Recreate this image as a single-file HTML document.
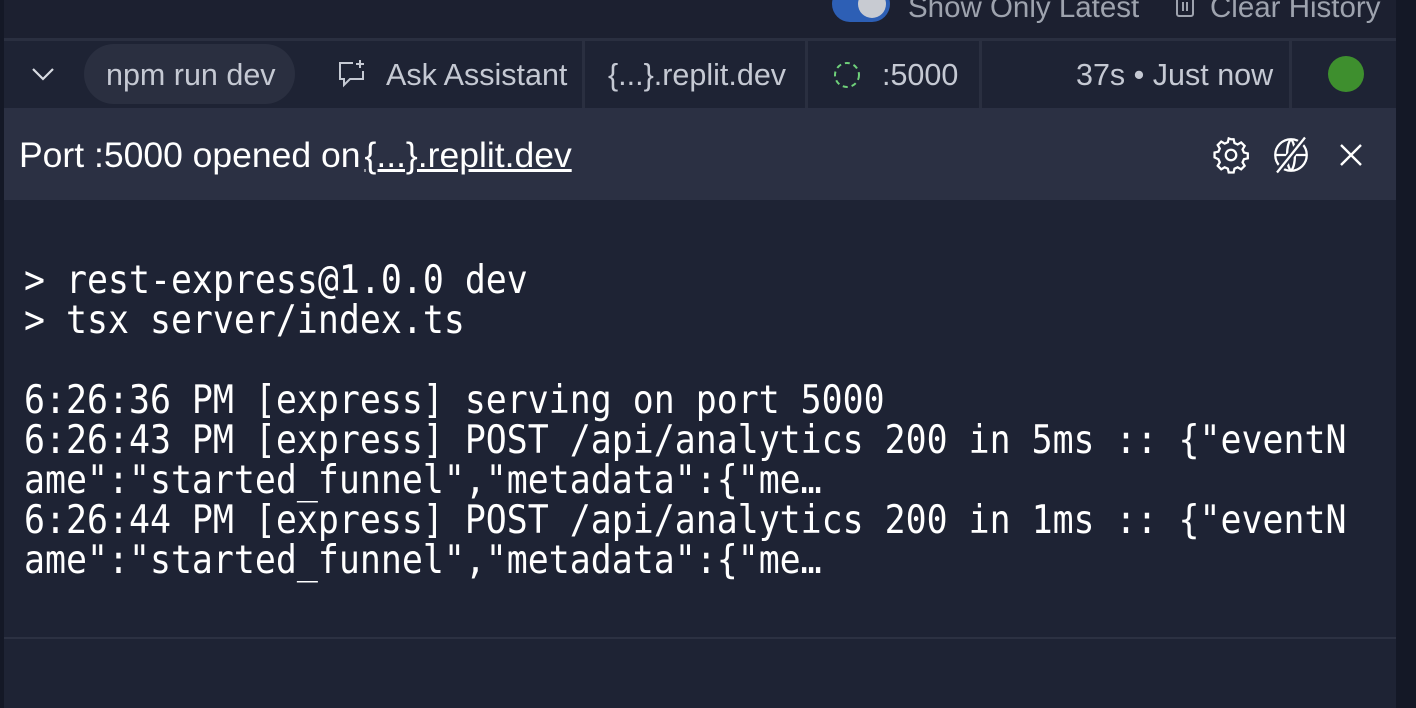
<!DOCTYPE html>
<html><head><style>
*{margin:0;padding:0;box-sizing:border-box}
body{width:1416px;height:708px;overflow:hidden;background:#1e2334;font-family:"Liberation Sans",sans-serif;position:relative;color:#c5c9d3}
.abs{position:absolute}
.t{font-size:30.5px;white-space:nowrap;position:absolute;line-height:1}
.sep{position:absolute;top:40px;width:3px;height:68px;background:#2a2f40}
.mono{font-family:"DejaVu Sans Mono","Liberation Mono",monospace;font-size:39px;line-height:40px;color:#fff;white-space:pre;position:absolute;left:24px;top:261px;transform:scaleX(0.894);transform-origin:0 0}
</style></head><body>
<div class="abs" style="left:0;top:0;width:4px;height:708px;background:#141826"></div>
<div class="abs" style="left:4px;top:0;width:1392px;height:38px;background:#1c2030"></div>
<div class="abs" style="left:4px;top:38px;width:1392px;height:3px;background:#2a2f40"></div>
<div class="abs" style="left:832px;top:-14px;width:58px;height:36px;border-radius:18px;background:#2d5fb5"></div>
<div class="abs" style="left:858px;top:-10px;width:28px;height:28px;border-radius:14px;background:#c8cbd2"></div>
<div class="t" style="left:908px;top:-7px;color:#9ea3ae;font-size:29.5px">Show Only Latest</div>
<svg class="abs" style="left:1174px;top:-4px" width="22" height="24" viewBox="0 0 22 24"><rect x="3" y="2" width="16" height="18" rx="2" fill="none" stroke="#9ea3ae" stroke-width="2"/><path d="M9 6v9M13 6v9" stroke="#9ea3ae" stroke-width="2"/></svg>
<div class="t" style="left:1210px;top:-7px;color:#9ea3ae;font-size:29.5px">Clear History</div>
<div class="abs" style="left:4px;top:41px;width:1392px;height:67px;background:#1e2334"></div>
<svg class="abs" style="left:30px;top:64px" width="26" height="20" viewBox="0 0 26 20"><path d="M3 5l10 10 10-10" fill="none" stroke="#d8dbe2" stroke-width="2.2"/></svg>
<div class="abs" style="left:84px;top:44px;width:211px;height:60px;border-radius:30px;background:#2a2f40"></div>
<div class="t" style="left:106px;top:60px;color:#c5c9d3">npm run dev</div>
<svg class="abs" style="left:336px;top:58px" width="32" height="32" viewBox="0 0 32 32"><path d="M17 5H4v16h4v6l6-6h13v-8" fill="none" stroke="#c5c9d3" stroke-width="2"/><path d="M24 2v8M20 6h8" stroke="#c5c9d3" stroke-width="2"/></svg>
<div class="t" style="left:386px;top:60px">Ask Assistant</div>
<div class="sep" style="left:582px"></div>
<div class="t" style="left:608px;top:60px">{...}.replit.dev</div>
<div class="sep" style="left:805px"></div>
<svg class="abs" style="left:832px;top:60px" width="30" height="30" viewBox="0 0 30 30"><circle cx="15" cy="15" r="12" fill="none" stroke="#6fd17a" stroke-width="2" stroke-dasharray="5 4"/></svg>
<div class="t" style="left:882px;top:60px">:5000</div>
<div class="sep" style="left:979px"></div>
<div class="t" style="left:1076px;top:60px">37s • Just now</div>
<div class="sep" style="left:1289px"></div>
<div class="abs" style="left:1328px;top:56px;width:36px;height:36px;border-radius:18px;background:#3e8f2e"></div>
<div class="abs" style="left:4px;top:108px;width:1392px;height:92px;background:#2b3043"></div>
<div class="t" style="left:19px;top:138px;color:#fff;font-size:35.5px">Port :5000 opened on<span style="text-decoration:underline;margin-left:4px">{...}.replit.dev</span></div>
<svg class="abs" style="left:1210px;top:134px" width="42" height="42" viewBox="0 0 24 24"><path d="M12 3l1.5 0 .5 2.2 1.8.8 2-1.2 2 2-1.2 2 .8 1.8 2.2.5v2.8l-2.2.5-.8 1.8 1.2 2-2 2-2-1.2-1.8.8-.5 2.2h-2.8l-.5-2.2-1.8-.8-2 1.2-2-2 1.2-2-.8-1.8L2.6 13.4v-2.8l2.2-.5.8-1.8-1.2-2 2-2 2 1.2 1.8-.8.5-2.2z" fill="none" stroke="#fff" stroke-width="1.3"/><circle cx="12" cy="12" r="3" fill="none" stroke="#fff" stroke-width="1.3"/></svg>
<svg class="abs" style="left:1270px;top:134px" width="42" height="42" viewBox="0 0 24 24"><circle cx="12" cy="12" r="9" fill="none" stroke="#fff" stroke-width="1.3"/><path d="M3 12h18M12 3c-3 3-3 15 0 18M12 3c3 3 3 15 0 18" fill="none" stroke="#fff" stroke-width="1.3"/><path d="M4 22L20 2" stroke="#2b3043" stroke-width="4"/><path d="M4 22L20 2" stroke="#fff" stroke-width="1.3"/></svg>
<svg class="abs" style="left:1336px;top:140px" width="30" height="30" viewBox="0 0 30 30"><path d="M5 5l20 20M25 5L5 25" stroke="#fff" stroke-width="2.4"/></svg>
<div class="mono">&gt; rest-express@1.0.0 dev
&gt; tsx server/index.ts

6:26:36 PM [express] serving on port 5000
6:26:43 PM [express] POST /api/analytics 200 in 5ms :: {"eventN
ame":"started_funnel","metadata":{"me…
6:26:44 PM [express] POST /api/analytics 200 in 1ms :: {"eventN
ame":"started_funnel","metadata":{"me…</div>
<div class="abs" style="left:4px;top:637px;width:1392px;height:2px;background:#2c3142"></div>
<div class="abs" style="left:1396px;top:0;width:20px;height:708px;background:#141826"></div>
</body></html>
